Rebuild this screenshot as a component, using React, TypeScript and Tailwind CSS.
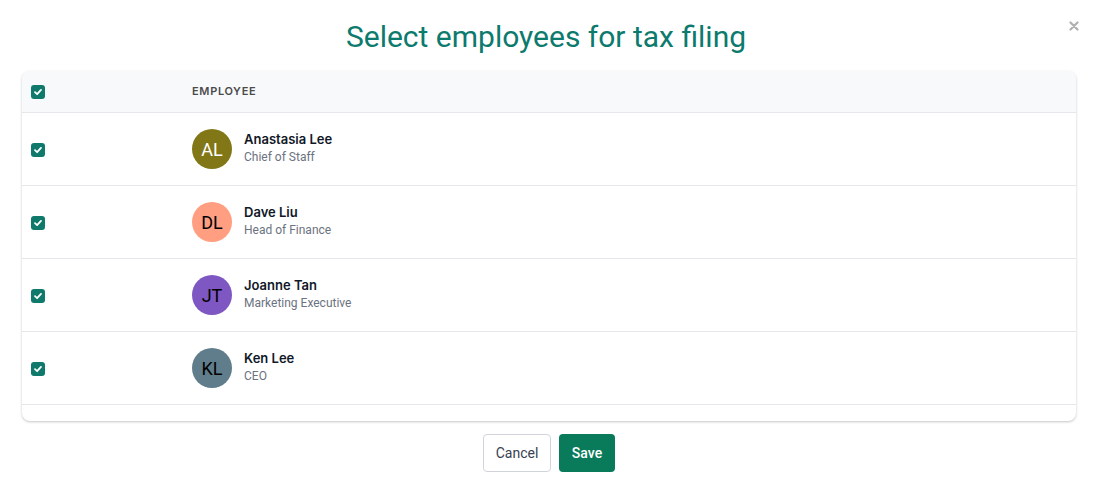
import React from "react";

const people = [
  { i: "AL", name: "Anastasia Lee", title: "Chief of Staff", bg: "bg-[#827717]", fg: "text-white" },
  { i: "DL", name: "Dave Liu", title: "Head of Finance", bg: "bg-[#ff9e80]", fg: "text-black" },
  { i: "JT", name: "Joanne Tan", title: "Marketing Executive", bg: "bg-[#7e57c2]", fg: "text-black" },
  { i: "KL", name: "Ken Lee", title: "CEO", bg: "bg-[#607d8b]", fg: "text-black" },
];

function Check() {
  return (
    <span className="flex h-[14px] w-[14px] items-center justify-center rounded-[3px] bg-[#0f7a6c]">
      <svg width="10" height="10" viewBox="0 0 10 10" fill="none">
        <path d="M2 5.2 L4.1 7.2 L8 2.9" stroke="white" strokeWidth="1.8" strokeLinecap="round" strokeLinejoin="round" />
      </svg>
    </span>
  );
}

export default function App() {
  return (
    <div className="relative flex h-[489px] w-[1098px] flex-col bg-white font-['Roboto',sans-serif]">
      <button className="absolute right-[19px] top-[21px] text-[#b0b0b0]">
        <svg width="10" height="10" viewBox="0 0 10 10">
          <path d="M1.5 1.5 L8.5 8.5 M8.5 1.5 L1.5 8.5" stroke="currentColor" strokeWidth="2.2" strokeLinecap="round" />
        </svg>
      </button>
      <h1 className="mt-[18px] pr-[6px] text-center text-[30px] leading-[38px] text-[#0c7a6d]">Select employees for tax filing</h1>
      <div className="mx-[22px] mt-[15px] overflow-hidden rounded-lg bg-white shadow-[0_1px_3px_rgba(0,0,0,0.18),0_1px_2px_rgba(0,0,0,0.06)]">
        <div className="flex h-[42px] items-center border-b border-[#e5e7eb] bg-[#f8f9fb]">
          <div className="w-[170px] pl-[9px] pt-[1px]">
            <Check />
          </div>
          <div className="font-['Inter',sans-serif] text-[11px] font-semibold tracking-[0.06em] text-[#4b4b4b]">EMPLOYEE</div>
        </div>
        {people.map((p) => (
          <div key={p.i} className="flex h-[73px] items-center border-b border-[#e5e7eb]">
            <div className="w-[170px] pl-[9px] pt-[1px]">
              <Check />
            </div>
            <div className="flex items-center gap-3">
              <div className={`flex h-10 w-10 items-center justify-center rounded-full ${p.bg} ${p.fg} text-[18px]`}>{p.i}</div>
              <div className="-mt-[2px] flex flex-col">
                <span className="font-['Inter',sans-serif] text-[13px] font-semibold leading-[18px] text-[#111827]">{p.name}</span>
                <span className="text-[12px] leading-[18px] text-[#6b7280]">{p.title}</span>
              </div>
            </div>
          </div>
        ))}
        <div className="h-[16px]" />
      </div>
      <div className="mt-[13px] flex justify-center gap-2">
        <button className="h-[38px] w-[68px] rounded-[4px] border border-[#d1d5db] bg-white text-[14px] text-[#374151]">Cancel</button>
        <button className="h-[38px] w-[56px] rounded-[4px] bg-[#097a5a] text-[14px] font-medium text-white">Save</button>
      </div>
    </div>
  );
}
